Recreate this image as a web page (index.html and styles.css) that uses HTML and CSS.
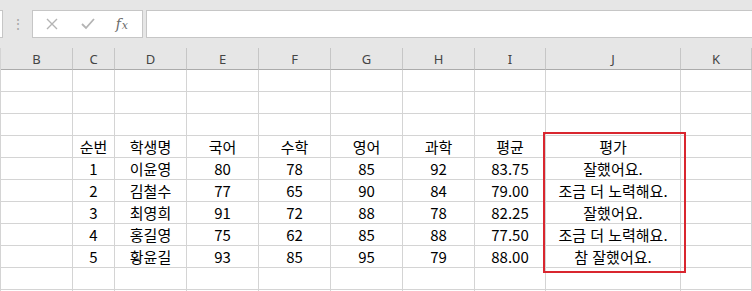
FILE: index.html
```html
<!DOCTYPE html>
<html lang="ko">
<head>
  <meta charset="UTF-8" />
  <title>학생 성적표</title>
  <link rel="stylesheet" href="styles.css">
</head>
<body>
  <div class="formula-bar">
    <div class="name-box"></div>
    <span class="grip">⋮</span>
    <div class="fx-box">
      <span class="btn">
        <svg width="12" height="12" viewBox="0 0 12 12"><path d="M1 1 L11 11 M11 1 L1 11" stroke="#b4b4b4" stroke-width="1.4" fill="none"/></svg>
      </span>
      <span class="btn">
        <svg width="14" height="12" viewBox="0 0 14 12"><path d="M1 6 L5 10 L13 1" stroke="#b4b4b4" stroke-width="1.8" fill="none"/></svg>
      </span>
      <span class="btn fx"><i>f</i><i class="x">x</i></span>
    </div>
    <div class="input-box"></div>
  </div>

  <div class="sheet">
    <div class="row head">
      <div class="cell">B</div>
      <div class="cell">C</div>
      <div class="cell">D</div>
      <div class="cell">E</div>
      <div class="cell">F</div>
      <div class="cell">G</div>
      <div class="cell">H</div>
      <div class="cell">I</div>
      <div class="cell">J</div>
      <div class="cell">K</div>
    </div>
    <div class="row"><div class="cell"></div><div class="cell"></div><div class="cell"></div><div class="cell"></div><div class="cell"></div><div class="cell"></div><div class="cell"></div><div class="cell"></div><div class="cell"></div><div class="cell"></div></div>
    <div class="row"><div class="cell"></div><div class="cell"></div><div class="cell"></div><div class="cell"></div><div class="cell"></div><div class="cell"></div><div class="cell"></div><div class="cell"></div><div class="cell"></div><div class="cell"></div></div>
    <div class="row"><div class="cell"></div><div class="cell"></div><div class="cell"></div><div class="cell"></div><div class="cell"></div><div class="cell"></div><div class="cell"></div><div class="cell"></div><div class="cell"></div><div class="cell"></div></div>
    <div class="row">
      <div class="cell"></div><div class="cell">순번</div><div class="cell">학생명</div><div class="cell">국어</div><div class="cell">수학</div><div class="cell">영어</div><div class="cell">과학</div><div class="cell">평균</div><div class="cell">평가</div><div class="cell"></div>
    </div>
    <div class="row">
      <div class="cell"></div><div class="cell">1</div><div class="cell">이윤영</div><div class="cell">80</div><div class="cell">78</div><div class="cell">85</div><div class="cell">92</div><div class="cell">83.75</div><div class="cell">잘했어요.</div><div class="cell"></div>
    </div>
    <div class="row">
      <div class="cell"></div><div class="cell">2</div><div class="cell">김철수</div><div class="cell">77</div><div class="cell">65</div><div class="cell">90</div><div class="cell">84</div><div class="cell">79.00</div><div class="cell">조금 더 노력해요.</div><div class="cell"></div>
    </div>
    <div class="row">
      <div class="cell"></div><div class="cell">3</div><div class="cell">최영희</div><div class="cell">91</div><div class="cell">72</div><div class="cell">88</div><div class="cell">78</div><div class="cell">82.25</div><div class="cell">잘했어요.</div><div class="cell"></div>
    </div>
    <div class="row">
      <div class="cell"></div><div class="cell">4</div><div class="cell">홍길영</div><div class="cell">75</div><div class="cell">62</div><div class="cell">85</div><div class="cell">88</div><div class="cell">77.50</div><div class="cell">조금 더 노력해요.</div><div class="cell"></div>
    </div>
    <div class="row">
      <div class="cell"></div><div class="cell">5</div><div class="cell">황윤길</div><div class="cell">93</div><div class="cell">85</div><div class="cell">95</div><div class="cell">79</div><div class="cell">88.00</div><div class="cell">참 잘했어요.</div><div class="cell"></div>
    </div>
    <div class="row"><div class="cell"></div><div class="cell"></div><div class="cell"></div><div class="cell"></div><div class="cell"></div><div class="cell"></div><div class="cell"></div><div class="cell"></div><div class="cell"></div><div class="cell"></div></div>
    <div class="row"><div class="cell"></div><div class="cell"></div><div class="cell"></div><div class="cell"></div><div class="cell"></div><div class="cell"></div><div class="cell"></div><div class="cell"></div><div class="cell"></div><div class="cell"></div></div>

    <div class="highlight"></div>
  </div>
</body>
</html>
```

FILE: styles.css
```css
:root {
  --fundo-barra: #e6e6e6;
  --linha-grade: #d4d4d4;
  --linha-caixa: #c6c6c6;
  --vermelho: #d9262f;
}

* {
  margin: 0;
  padding: 0;
  box-sizing: border-box;
}

body {
  width: 752px;
  height: 291px;
  overflow: hidden;
  background: #fff;
  font-family: "Noto Sans CJK KR", "Noto Sans", sans-serif;
  color: #000;
}

/* barra de fórmulas */
.formula-bar {
  height: 48px;
  background: var(--fundo-barra);
  display: flex;
  align-items: flex-start;
  padding-top: 10px;
}

.name-box {
  width: 3px;
  height: 28px;
  background: #fff;
  border: 1px solid var(--linha-caixa);
  border-left: none;
}

.grip {
  width: 29px;
  text-align: center;
  color: #a8a8a8;
  font-size: 14px;
  line-height: 27px;
}

.fx-box {
  width: 111px;
  height: 28px;
  background: #fff;
  border: 1px solid var(--linha-caixa);
  display: flex;
  align-items: center;
  padding-left: 13px;
}

.btn {
  width: 36px;
  display: flex;
  align-items: center;
}

.btn + .btn {
  padding-left: 3px;
}

.btn.fx {
  font-family: "DejaVu Serif", "Liberation Serif", serif;
  color: #6a6a6a;
  font-size: 14px;
  padding-left: 6px;
}

.btn.fx .x {
  font-size: 11px;
  margin-left: 1px;
  margin-top: 3px;
}

.input-box {
  flex: 1;
  height: 28px;
  margin-left: 3px;
  background: #fff;
  border: 1px solid var(--linha-caixa);
  border-right: none;
}

/* planilha */
.sheet {
  position: relative;
  height: 243px;
  overflow: hidden;
  border-left: 1px solid var(--linha-grade);
}

.row {
  display: grid;
  grid-template-columns: 72px 42px 72px 72px 72px 72px 72px 71px 135px 1fr;
  height: 22px;
}

.cell {
  border-right: 1px solid var(--linha-grade);
  border-bottom: 1px solid var(--linha-grade);
  display: flex;
  align-items: center;
  justify-content: center;
  font-size: 15px;
  white-space: nowrap;
  overflow: hidden;
}

.row.head {
  background: var(--fundo-barra);
}

.row.head .cell {
  border-right-color: #c6c6c6;
  border-bottom-color: #ababab;
  font-family: "Noto Sans", sans-serif;
  font-size: 13px;
  color: #444;
}

.highlight {
  position: absolute;
  left: 542px;
  top: 84px;
  width: 143px;
  height: 141px;
  border: 2px solid var(--vermelho);
  pointer-events: none;
}
```
